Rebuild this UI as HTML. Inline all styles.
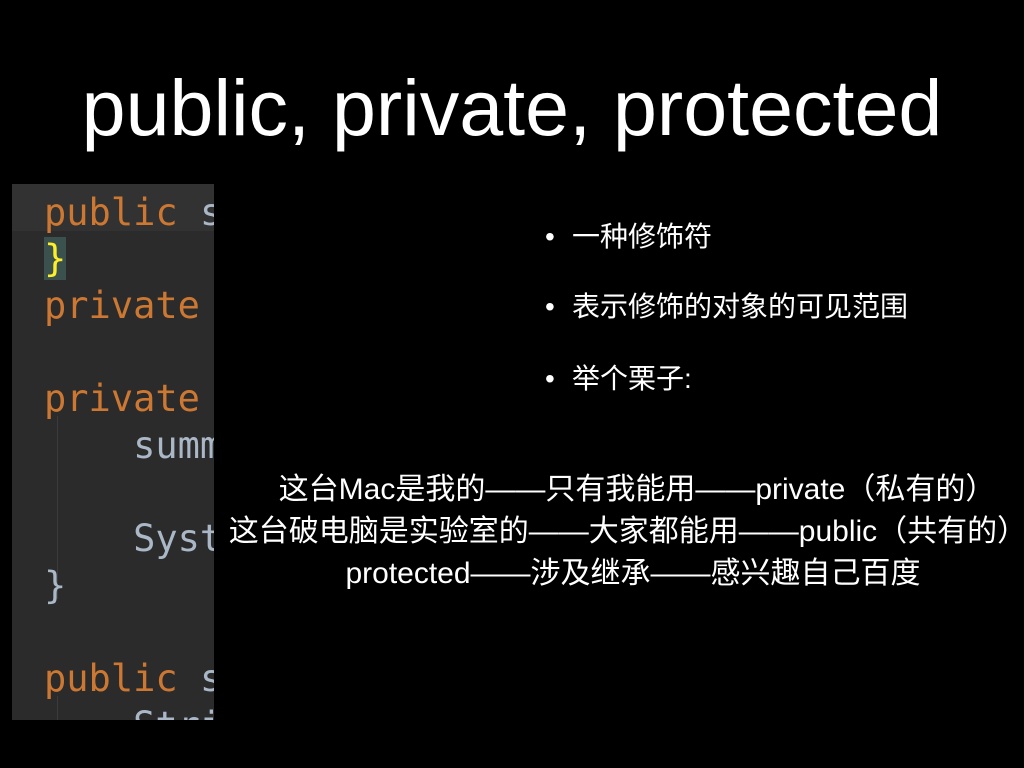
<!DOCTYPE html>
<html><head><meta charset="utf-8"><style>
html,body{margin:0;padding:0;background:#000;width:1024px;height:768px;overflow:hidden;position:relative;font-family:"Liberation Sans","Noto Sans CJK SC",sans-serif;color:#fff}
.title{position:absolute;left:0;width:1024px;top:60px;text-align:center;font-size:79px;line-height:96px;font-family:"Liberation Sans",sans-serif}
.code{position:absolute;left:12px;top:184px;width:202px;height:536px;background:#2b2b2b;overflow:hidden}
.hl{position:absolute;left:0;top:0;width:202px;height:47px;background:#323232}
.ln{position:absolute;left:32px;font-family:"DejaVu Sans Mono",monospace;font-size:37px;white-space:pre;line-height:46px}
.k{color:#cc7832}.t{color:#a9b7c6}
.guide{position:absolute;left:45px;width:1px;background:#3b3b3b}
.b{position:absolute;left:545px;font-size:28px;line-height:36px}
.b span{position:absolute;left:27px;white-space:nowrap}
.c{position:absolute;left:0;width:1024px;text-align:center;font-size:30px;line-height:42px;white-space:nowrap}
</style></head><body>
<div class="title">public, private, protected</div>
<div class="code">
<div class="hl"></div>
<div class="ln k" style="top:6px">public <span class="t">s</span></div>
<div class="ln" style="top:52px"><span style="background:#3b514d;color:#ffef28">}</span></div>
<div class="ln k" style="top:99px">private</div>
<div class="ln k" style="top:192px">private</div>
<div class="guide" style="top:232px;height:183px"></div>
<div class="ln t" style="top:239px">    summ</div>
<div class="ln t" style="top:332px">    Syst</div>
<div class="ln t" style="top:379px">}</div>
<div class="ln k" style="top:472px">public <span class="t">s</span></div>
<div class="guide" style="top:512px;height:30px"></div>
<div class="ln t" style="top:519px">    Stri</div>
</div>
<div class="b" style="top:219px">•<span>一种修饰符</span></div>
<div class="b" style="top:289px">•<span>表示修饰的对象的可见范围</span></div>
<div class="b" style="top:361px">•<span>举个栗子:</span></div>
<div class="c" style="top:469px;left:125px">这台Mac是我的——只有我能用——private（私有的）</div>
<div class="c" style="top:511px;left:116px">这台破电脑是实验室的——大家都能用——public（共有的）</div>
<div class="c" style="top:553px;left:121px">protected——涉及继承——感兴趣自己百度</div>
</body></html>
